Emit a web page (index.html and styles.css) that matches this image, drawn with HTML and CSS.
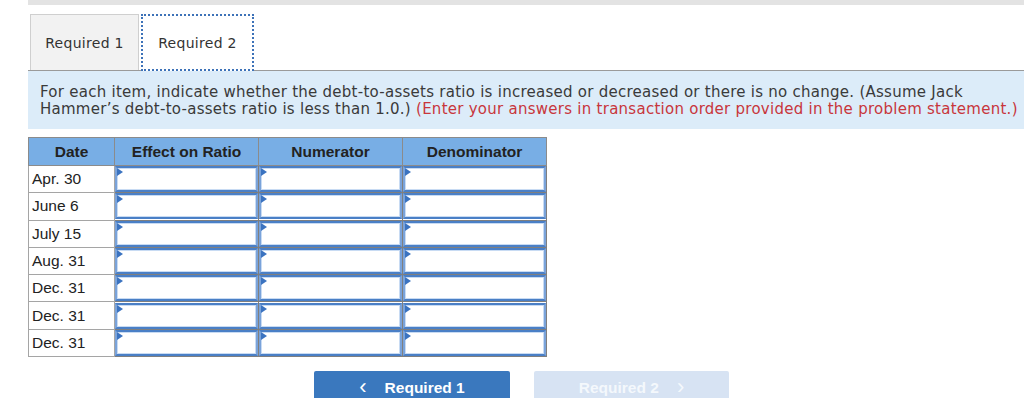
FILE: index.html
```html
<!DOCTYPE html>
<html>
<head>
<meta charset="utf-8">
<link rel="stylesheet" href="styles.css">
</head>
<body>
<div class="topbar"></div>
<div class="tabs">
  <div class="tab tab-inactive">Required 1</div>
  <div class="tab tab-active">Required 2</div>
</div>
<div class="instructions">
  For each item, indicate whether the debt-to-assets ratio is increased or decreased or there is no change. (Assume Jack<br>Hammer’s debt-to-assets ratio is less than 1.0.) <span class="red">(Enter your answers in transaction order provided in the problem statement.)</span>
</div>
<table class="grid">
  <thead>
    <tr><th class="c-date">Date</th><th class="c-wide">Effect on Ratio</th><th class="c-wide">Numerator</th><th class="c-wide">Denominator</th></tr>
  </thead>
  <tbody>
    <tr><td class="date">Apr. 30</td><td class="in"><div class="box"></div></td><td class="in"><div class="box"></div></td><td class="in"><div class="box"></div></td></tr>
    <tr><td class="date">June 6</td><td class="in"><div class="box"></div></td><td class="in"><div class="box"></div></td><td class="in"><div class="box"></div></td></tr>
    <tr><td class="date">July 15</td><td class="in"><div class="box"></div></td><td class="in"><div class="box"></div></td><td class="in"><div class="box"></div></td></tr>
    <tr><td class="date">Aug. 31</td><td class="in"><div class="box"></div></td><td class="in"><div class="box"></div></td><td class="in"><div class="box"></div></td></tr>
    <tr><td class="date">Dec. 31</td><td class="in"><div class="box"></div></td><td class="in"><div class="box"></div></td><td class="in"><div class="box"></div></td></tr>
    <tr><td class="date">Dec. 31</td><td class="in"><div class="box"></div></td><td class="in"><div class="box"></div></td><td class="in"><div class="box"></div></td></tr>
    <tr><td class="date">Dec. 31</td><td class="in"><div class="box"></div></td><td class="in"><div class="box"></div></td><td class="in"><div class="box"></div></td></tr>
  </tbody>
</table>
<div class="nav">
  <div class="btn btn-prev"><span class="chev">&lsaquo;</span>Required 1</div>
  <div class="btn btn-next">Required 2<span class="chev chev-r">&rsaquo;</span></div>
</div>
</body>
</html>
```
FILE: styles.css
```css
html, body {
  margin: 0;
  padding: 0;
  background: #fff;
}
body {
  width: 1024px;
  height: 398px;
  overflow: hidden;
  font-family: "DejaVu Sans", Verdana, sans-serif;
}
.topbar {
  margin-left: 28px;
  height: 5px;
  background: #e3e3e3;
}
.tabs {
  display: flex;
  margin-top: 9px;
  margin-left: 28px;
  padding-left: 2px;
  gap: 2px;
  border-bottom: 1px solid #9a9a9a;
}
.tab {
  box-sizing: border-box;
  height: 56px;
  display: flex;
  align-items: center;
  justify-content: center;
  font-size: 14px;
  letter-spacing: 0.3px;
  color: #333;
}
.tab-inactive {
  width: 109px;
  background: #f2f2f2;
  border: 1px solid #cfcfcf;
  border-bottom: none;
}
.tab-active {
  width: 113px;
  background: #fff;
  border: 2px dotted #3d72b8;
  margin-bottom: -1px;
  height: 57px;
}
.instructions {
  margin-left: 28px;
  background: #dcecf9;
  padding: 13px 2px 11px 12px;
  font-size: 15px;
  letter-spacing: 0.26px;
  line-height: 17px;
  color: #3a3a3a;
  height: 34px;
  white-space: nowrap;
  overflow: hidden;
}
.red {
  color: #c8363c;
}
.grid {
  margin-top: 8px;
  margin-left: 28px;
  border-collapse: collapse;
  font-family: "Liberation Sans", Arial, sans-serif;
  font-size: 15.5px;
}
.grid th {
  background: #78aee5;
  color: #222;
  font-weight: bold;
  height: 28px;
  padding: 0;
  border: 1px solid #8b8b8b;
  box-sizing: border-box;
}
.c-date { width: 86px; }
.c-wide { width: 144px; }
.grid td {
  border: 1px solid #9a9a9a;
  padding: 0;
  height: 27.3px;
  box-sizing: border-box;
}
.grid td.date {
  padding-left: 3px;
  color: #222;
  border-color: #a5a5a5;
}
.grid td.in {
  border-color: #7f7f7f;
  padding: 0;
}
.box {
  position: relative;
  height: 26px;
  box-sizing: border-box;
  background: #fff;
  border-top: 2px solid #4a7fc6;
  border-bottom: 2px solid #4a7fc6;
  border-left: 2px solid #7aa3da;
  border-right: 2px solid #7aa3da;
  box-shadow: inset 0 0 0 1px #c8dbf3;
}
.box::before {
  content: "";
  position: absolute;
  top: 0;
  left: 0;
  width: 0;
  height: 0;
  border-top: 4px solid transparent;
  border-bottom: 4px solid transparent;
  border-left: 6px solid #3b73c0;
}
.nav {
  display: flex;
  margin-left: 314px;
  margin-top: 14px;
  gap: 24px;
  font-family: "Liberation Sans", Arial, sans-serif;
  font-size: 15.5px;
  font-weight: bold;
}
.btn {
  width: 196px;
  height: 28px;
  border-radius: 2px 2px 0 0;
  color: #fff;
  display: flex;
  justify-content: center;
  padding-top: 8px;
  box-sizing: border-box;
}
.btn-prev {
  background: #3a78be;
}
.btn-next {
  width: 195px;
  background: #d7e3f3;
  color: #f4f8fc;
}
.chev {
  font-size: 22px;
  line-height: 16px;
  margin-right: 18px;
  font-weight: normal;
}
.chev-r {
  margin-right: 0;
  margin-left: 18px;
}
```
